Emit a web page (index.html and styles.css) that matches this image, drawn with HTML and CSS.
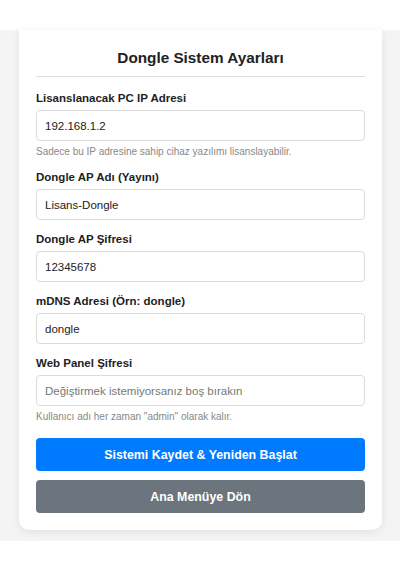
FILE: index.html
```html
<!DOCTYPE html>
<html lang="tr">
<head>
<meta charset="utf-8">
<title>Dongle Sistem Ayarları</title>
<link rel="stylesheet" href="styles.css">
</head>
<body>
<div class="page">
  <form class="card">
    <h2 class="title">Dongle Sistem Ayarları</h2>

    <div class="group">
      <label class="label">Lisanslanacak PC IP Adresi</label>
      <input class="input" type="text" value="192.168.1.2">
      <div class="help">Sadece bu IP adresine sahip cihaz yazılımı lisanslayabilir.</div>
    </div>

    <div class="group">
      <label class="label">Dongle AP Adı (Yayını)</label>
      <input class="input" type="text" value="Lisans-Dongle">
    </div>

    <div class="group">
      <label class="label">Dongle AP Şifresi</label>
      <input class="input" type="text" value="12345678">
    </div>

    <div class="group">
      <label class="label">mDNS Adresi (Örn: dongle)</label>
      <input class="input" type="text" value="dongle">
    </div>

    <div class="group">
      <label class="label">Web Panel Şifresi</label>
      <input class="input" type="password" placeholder="Değiştirmek istemiyorsanız boş bırakın">
      <div class="help">Kullanıcı adı her zaman "admin" olarak kalır.</div>
    </div>

    <div class="actions">
      <button type="button" class="btn btn-primary">Sistemi Kaydet &amp; Yeniden Başlat</button>
      <button type="button" class="btn btn-secondary">Ana Menüye Dön</button>
    </div>
  </form>
</div>
</body>
</html>
```
FILE: styles.css
```css
html, body {
  margin: 0;
  padding: 0;
  background: #ffffff;
  font-family: "Liberation Sans", Arial, sans-serif;
  color: #222;
}

.page {
  margin-top: 30px;
  background: #f4f4f4;
  padding: 0 18px 11px 19px;
}

.card {
  background: #ffffff;
  border-radius: 0 0 10px 10px;
  padding: 19px 17px 17px;
  box-shadow: 0 2px 8px rgba(0, 0, 0, 0.08);
}

.title {
  margin: 0 0 15px;
  padding-bottom: 9px;
  border-bottom: 1px solid #dddddd;
  font-size: 15.3px;
  line-height: 18px;
  font-weight: bold;
  text-align: center;
  color: #222;
}

.group {
  margin-bottom: 13px;
}

.label {
  display: block;
  font-size: 11.5px;
  line-height: 13px;
  font-weight: bold;
  color: #1e1e1e;
  margin-bottom: 5px;
}

.input {
  display: block;
  box-sizing: border-box;
  width: 100%;
  height: 31px;
  margin: 0;
  padding: 0 8px;
  border: 1px solid #dcdcdc;
  border-radius: 4px;
  font-family: "Liberation Sans", Arial, sans-serif;
  font-size: 11.5px;
  color: #222;
  background: #fff;
  outline: none;
}

.input::placeholder {
  color: #777;
}

.help {
  margin-top: 5px;
  font-size: 10px;
  line-height: 12px;
  color: #888;
}

.actions {
  display: flex;
  flex-direction: column;
  gap: 9px;
  margin-top: 15px;
}

.btn {
  display: block;
  width: 100%;
  height: 33px;
  border: none;
  border-radius: 4px;
  font-family: "Liberation Sans", Arial, sans-serif;
  font-size: 12.4px;
  font-weight: bold;
  color: #fff;
  cursor: pointer;
}

.btn-primary {
  background: #007bff;
}

.btn-secondary {
  background: #6c757d;
}
```
